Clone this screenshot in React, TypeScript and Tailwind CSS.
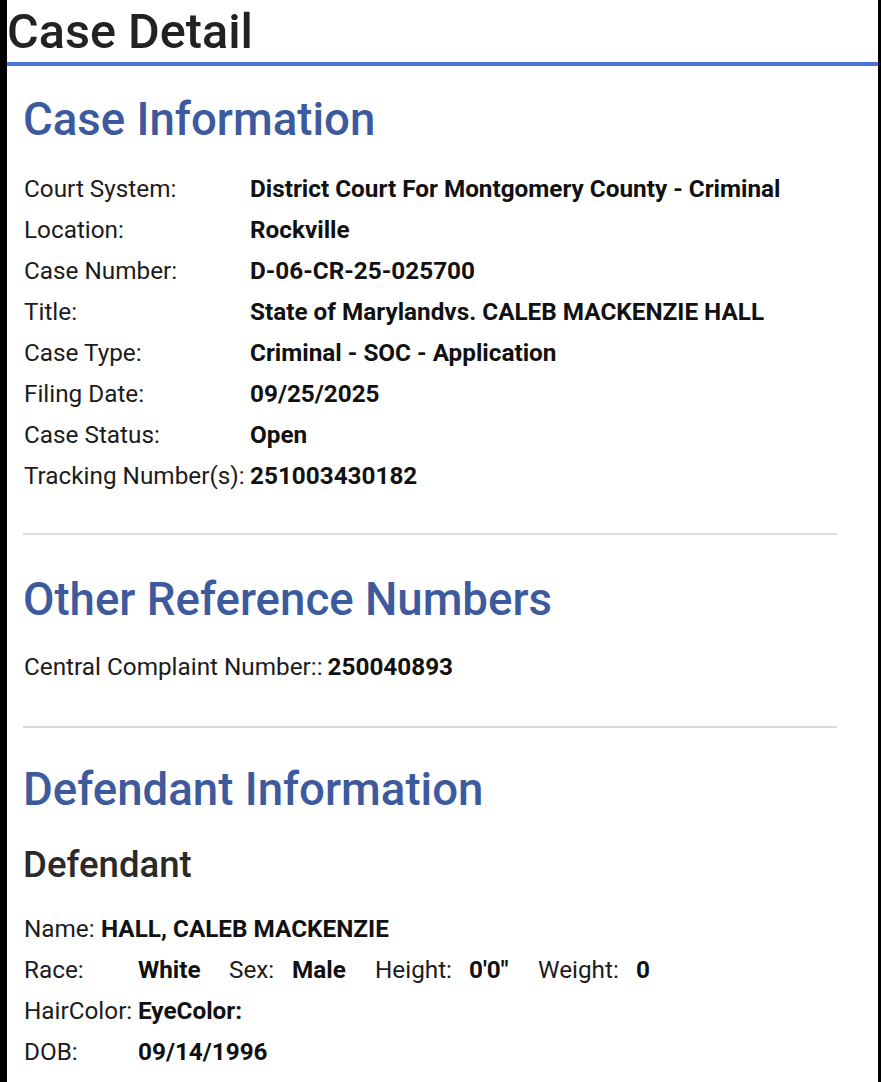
import React from "react";

const rows: [string, string][] = [
  ["Court System:", "District Court For Montgomery County - Criminal"],
  ["Location:", "Rockville"],
  ["Case Number:", "D-06-CR-25-025700"],
  ["Title:", "State of Marylandvs. CALEB MACKENZIE HALL"],
  ["Case Type:", "Criminal - SOC - Application"],
  ["Filing Date:", "09/25/2025"],
  ["Case Status:", "Open"],
  ["Tracking Number(s):", "251003430182"],
];

export default function App() {
  return (
    <div className="min-h-screen h-[1082px] overflow-hidden bg-black pl-[7px] pr-[3px] font-[Roboto,sans-serif] text-[#1c1c1c]">
      <div className="h-full bg-white">
        <div className="h-[66px] border-b-4 border-[#4a73d5] pt-1">
          <h1 className="text-[48.6px] leading-[56px] font-medium text-[#222]">Case Detail</h1>
        </div>
        <div className="pl-4">
          <h2 className="mt-[28px] text-[45.6px] leading-[52px] font-medium text-[#3d5a9e]">Case Information</h2>
          <div className="mt-[22px] text-[24.3px] leading-[41px]">
            {rows.map(([k, v]) => (
              <div key={k} className="flex whitespace-nowrap">
                <div className="w-[227px] shrink-0 pl-px">{k}</div>
                <div className="font-bold text-[#111]">{v}</div>
              </div>
            ))}
          </div>
          <div className="mt-[37px] h-[2px] w-[814px] bg-[#dadada]" />
          <h2 className="mt-[39px] text-[45.6px] leading-[52px] font-medium text-[#3d5a9e]">Other Reference Numbers</h2>
          <div className="mt-[20px] flex gap-[5px] pl-px text-[24.3px] leading-[41px] whitespace-nowrap">
            <span>Central Complaint Number::</span>
            <span className="font-bold text-[#111]">250040893</span>
          </div>
          <div className="mt-[39px] h-[2px] w-[814px] bg-[#dadada]" />
          <h2 className="mt-[36px] text-[45.6px] leading-[52px] font-medium text-[#3d5a9e]">Defendant Information</h2>
          <h3 className="mt-[28px] text-[36.6px] leading-[42px] font-medium text-[#2a2a2a]">Defendant</h3>
          <div className="mt-[22px] text-[24.3px] leading-[41px] whitespace-nowrap">
            <div className="flex pl-px">
              <div className="w-[77px] shrink-0">Name:</div>
              <div className="font-bold text-[#111]">HALL, CALEB MACKENZIE</div>
            </div>
            <div className="flex pl-px">
              <div className="w-[114px] shrink-0">Race:</div>
              <div className="w-[91px] shrink-0 font-bold text-[#111]">White</div>
              <div className="w-[63px] shrink-0">Sex:</div>
              <div className="w-[83px] shrink-0 font-bold text-[#111]">Male</div>
              <div className="w-[94px] shrink-0">Height:</div>
              <div className="w-[69px] shrink-0 font-bold text-[#111]">0'0"</div>
              <div className="w-[98px] shrink-0">Weight:</div>
              <div className="font-bold text-[#111]">0</div>
            </div>
            <div className="flex pl-px">
              <div className="w-[114px] shrink-0">HairColor:</div>
              <div className="font-bold text-[#111]">EyeColor:</div>
            </div>
            <div className="flex pl-px">
              <div className="w-[114px] shrink-0">DOB:</div>
              <div className="font-bold text-[#111]">09/14/1996</div>
            </div>
          </div>
        </div>
      </div>
    </div>
  );
}
